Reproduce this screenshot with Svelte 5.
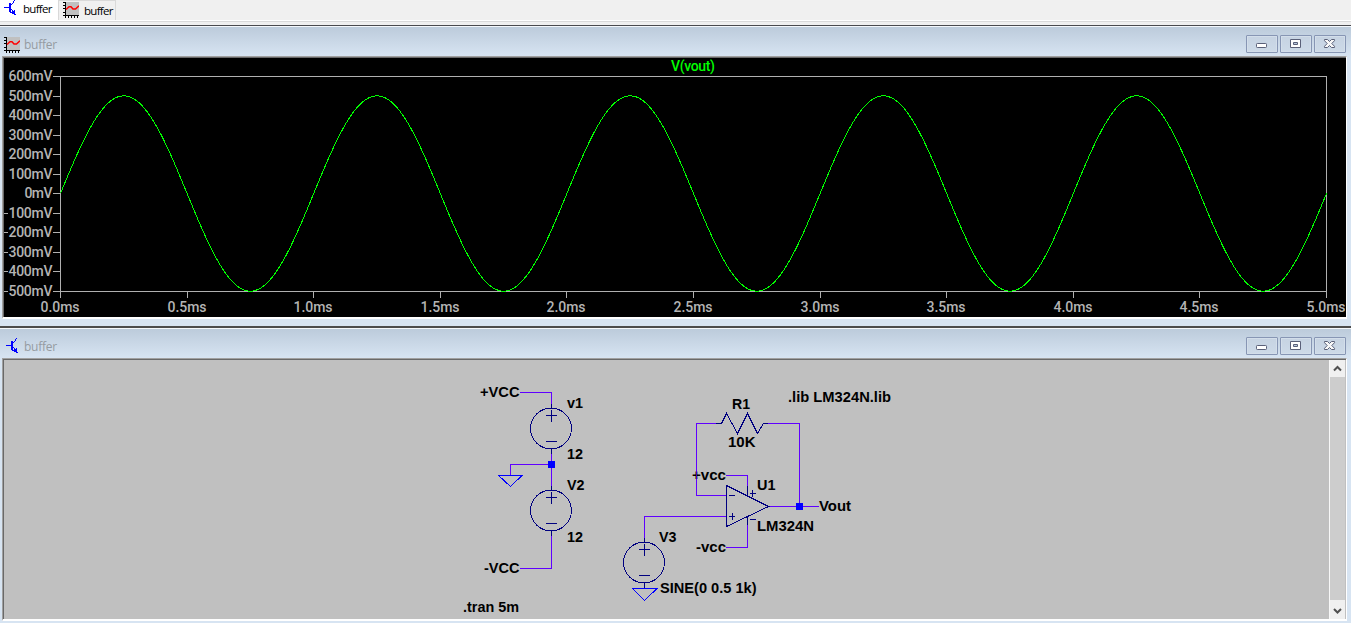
<script>
  const yTicks = [600, 500, 400, 300, 200, 100, 0, -100, -200, -300, -400, -500]
    .map((v, i) => ({ v, y: 76 + Math.round(i * 19.54) }));
  const xTicks = Array.from({ length: 11 }, (_, i) => ({
    label: (i * 0.5).toFixed(1) + 'ms',
    x: 60 + Math.round(i * 126.6)
  }));
  const wave = Array.from({ length: 423 }, (_, i) => {
    const x = i * 3;
    return `${x + 60.5},${(193.5 - 97.7 * Math.sin((x / 253.2) * 2 * Math.PI)).toFixed(2)}`;
  }).join(' ');

  const sources = [
    { x: 551.5, y: 428.5 },
    { x: 551.5, y: 510.5 },
    { x: 644.5, y: 562.5 }
  ];

  const labels = [
    ['+VCC', 480, 397, 39.5], ['v1', 567, 408, 16], ['12', 567, 459, 16],
    ['V2', 567, 490, 17.5], ['12', 567, 542, 16], ['-VCC', 484, 573, 35.5],
    ['.tran 5m', 463, 612, 56], ['R1', 732, 409, 18], ['10K', 728, 447, 27.5],
    ['.lib LM324N.lib', 788, 402, 103], ['+vcc', 692, 480, 34], ['U1', 757, 490, 18.5],
    ['LM324N', 757, 531, 57], ['Vout', 819, 511, 32], ['-vcc', 696, 552, 30],
    ['V3', 659, 542, 17.5], ['SINE(0 0.5 1k)', 660, 593, 96.5]
  ];
</script>

{#snippet transistor()}
  <svg class="ico" width="16" height="16" viewBox="0 0 16 16" shape-rendering="crispEdges">
    <path d="M0 7h5v1H0zM5 3h2v9H5zM7 4h1v1H7zM8 3h1v1H8zM9 1h1v2H9zM10 0h1v1h-1z" fill="#00f" />
    <path d="M7 9h1v1H7zM8 10h1v2H8zM9 11h1v1H9zM6 12h4v1H6zM8 13h3v1H8zM10 10h1v4h-1zM10 14h1v1h-1zM11 15h1v-1h-1z" fill="#00f" />
  </svg>
{/snippet}

{#snippet chart()}
  <svg class="ico" width="16" height="16" viewBox="0 0 16 16">
    <path d="M2 0h14v13H2z" fill="#c0c0c0" />
    <path d="M2 0h1v16H2zM0 13h16v1H0zM0 0h2v1H0zM0 3h2v1H0zM0 6h2v1H0zM0 10h2v1H0zM5 14h1v2H5zM8 14h1v2H8zM11 14h1v2h-1zM14 14h1v2h-1z" fill="#000" />
    <path d="M3 7.500L6 4.800H8L10 7H12.500L16 3.700" fill="none" stroke="#f00" stroke-width="1.500" />
  </svg>
{/snippet}

{#snippet buttons()}
  <div class="buttons">
    <span class="btn">
      <svg width="30" height="16" viewBox="0 0 30 16"><rect x="9.500" y="7.500" width="10" height="4" rx="0.8" fill="#fff" stroke="#5a6078" /></svg>
    </span>
    <span class="btn">
      <svg width="30" height="16" viewBox="0 0 30 16"><path d="M9.500 3.500h10v8h-10z" fill="#fff" stroke="#5a6078" /><path d="M12.500 6.500h4v2h-4z" fill="#b8c8de" stroke="#5a6078" /></svg>
    </span>
    <span class="btn">
      <svg width="30" height="16" viewBox="0 0 30 16"><path d="M9.500 3.500h3l2 2 2-2h3v1.200l-2.700 2.800 2.700 2.800v1.200h-3l-2-2-2 2h-3v-1.200l2.700-2.800-2.700-2.800z" fill="#f8f8f8" stroke="#5a6078" /></svg>
    </span>
  </div>
{/snippet}

<div class="app">
  <nav class="tabs">
    <div class="tab active">{@render transistor()}<span>buffer</span></div>
    <div class="tab second">{@render chart()}<span>buffer</span></div>
  </nav>

  <section class="win upper">
    <header>{@render chart()}<span class="name">buffer</span>{@render buttons()}</header>
    <div class="frame">
      <svg class="plot" width="1341" height="259" viewBox="4 58 1341 259">
        <g class="axis" shape-rendering="crispEdges">
          <path d="M60.5 76.500H1326.500V298M60.5 76V298M53 291.500H1327" />
          {#each yTicks as t}<path d="M53 {t.y + 0.5}h8" />{/each}
          {#each xTicks as t}<path d="M{t.x + 0.5} 291v7" />{/each}
        </g>
        {#each yTicks as t}
          {@const len = t.v === 0 ? 28 : 44}
          <text class="tick" x={52.5 - len} y={t.y + 5} textLength={len}>{Math.abs(t.v)}mV</text>
          {#if t.v < 0}<path d="M4 {t.y + 0.5}h4" class="axis" shape-rendering="crispEdges" />{/if}
        {/each}
        {#each xTicks as t}
          <text class="tick" x={t.x - 19.5} y="312" textLength="39">{t.label}</text>
        {/each}
        <polyline class="wave" points={wave} shape-rendering="crispEdges" />
        <text class="trace" x="671" y="71" textLength="44">V(vout)</text>
      </svg>
    </div>
  </section>

  <section class="win lower">
    <header><i class="inset"></i>{@render transistor()}<span class="name">buffer</span>{@render buttons()}</header>
    <div class="frame sheet">
      <svg class="schematic" width="1325" height="259" viewBox="4 360 1325 259">
        <g class="wire" shape-rendering="crispEdges">
          <path d="M520 392.500H551.500V404M551.500 453V486M551.500 464.500H510.500V475M551.500 536V568.500H520" />
          <path d="M717 423.500H696.500V495.500H726M768 423.500H799.500V506M768 506.500H819M726 475.500H747.500V486M747.500 525V547.500H726M726 516.500H644.500V538" />
        </g>
        <g class="part" shape-rendering="crispEdges">
          {#each sources as s}
            <circle cx={s.x - 0.5} cy={s.y} r="20.400" />
            <path d="M{s.x} {s.y - 24.5}v4.500M{s.x} {s.y + 20}v5M{s.x - 5.5} {s.y - 13}h11M{s.x} {s.y - 18.5}v11.500M{s.x - 5.5} {s.y + 13}h11" />
          {/each}
          <path d="M716 423.500H721.500L726.500 413.500L737.500 433.500L747.500 413.500L757.500 433.500L763.500 423.500H768" />
          <path d="M726.500 485.500L768.500 506.500L726.500 526.500ZM747.500 486V495.500M747.500 516V525M729 495.500h6M729 516.500h6M732.500 513v7M750 493.500h6M752.500 490v7M750 519.500h6M644.500 582v6" />
        </g>
        <g class="ground" shape-rendering="crispEdges">
          <path d="M498.500 475.500H522L510.500 486.500ZM632.500 588.500H657L644.500 600.500Z" />
        </g>
        <path d="M548 461h7v7h-7zM796 503h7v7h-7z" fill="#00f" />
        {#each labels as [text, x, y, len]}
          <text class="label" {x} {y} textLength={len} lengthAdjust="spacingAndGlyphs">{text}</text>
        {/each}
        <path d="M696.500 466V485" stroke="#6000ff" opacity=".7" shape-rendering="crispEdges" />
      </svg>
      <div class="scroll">
        <span><svg width="15" height="17" viewBox="0 0 15 17"><path d="M4 10.500L7.500 7L11 10.500" /></svg></span>
        <span><svg width="15" height="19" viewBox="0 0 15 19"><path d="M4 9L7.500 12.500L11 9" /></svg></span>
      </div>
    </div>
  </section>
</div>

<style>
  :global(body) { margin: 0; overflow: hidden; }
  .app {
    width: 1351px; height: 623px; overflow: hidden;
    display: flex; flex-direction: column;
    background: #d7e4f2; font-family: "Open Sans", "Noto Sans", sans-serif;
  }
  .ico { display: block; flex: none; }
  .tabs {
    box-sizing: border-box; height: 25px; flex: none; display: flex;
    background: linear-gradient(#f0f0f0 0 20px, #fff 20px 21px, #d9d9d9 21px 22px, #f0f0f0 22px);
  }
  .tab {
    box-sizing: border-box; display: flex; align-items: flex-start;
    font-size: 11.500px; line-height: 16px; color: #000; letter-spacing: -0.7px;
  }
  .active { width: 58px; height: 21px; padding: 0 0 0 4px; background: #fff; }
  .active span { margin: 1px 0 0 3px; }
  .second {
    width: 58px; height: 20px; padding: 1px 0 0 4px;
    border: solid #d9d9d9; border-width: 1px 1px 0 1px;
  }
  .second span { margin: 1px 0 0 5px; }
  .win { box-sizing: border-box; flex: none; display: flex; flex-direction: column; }
  .upper { height: 301px; border-top: 1px solid #4a4a4e; }
  .lower { height: 297px; border-top: 2px solid #4c4c4c; }
  header {
    box-sizing: border-box; display: flex; align-items: flex-start; flex: none;
    height: 30px; padding: 10px 5px 0 4px;
    border-top: 1px solid #f4f8fc;
    background: linear-gradient(#bccbdb, #d7e4f2);
  }
  .inset { width: 2px; }
  .lower .ico { margin-top: -1px; }
  .name { margin-left: 4px; font-size: 12px; line-height: 16px; color: #959ba1; letter-spacing: -0.25px; }
  .lower .name { margin-left: 2px; }
  .buttons { display: flex; gap: 2px; margin: -2px 0 0 auto; }
  .btn {
    box-sizing: border-box; width: 32px; height: 18px;
    border: 1px solid #8796b4; border-radius: 1px;
    background: linear-gradient(#c6d3e2, #cddae8); box-shadow: inset 0 0 0 1px #d3deea;
  }
  .btn svg { display: block; }
  .frame {
    box-sizing: border-box; flex: none; margin: 0 4px 0 2px; height: 263px;
    border: solid; border-width: 1px 1px 2px 1px; border-color: #a0a0a0 #fff #fff #a0a0a0;
    display: flex; background: #000; box-shadow: inset 1px 1px #696969;
    padding: 1px 0 0 1px;
  }
  .plot { display: block; }
  .axis { fill: none; stroke: #b0b0b0; }
  .tick { font: 500 14px Roboto, "Liberation Sans", sans-serif; fill: #b4b4b4; }
  .trace { font: 500 14px Roboto, "Liberation Sans", sans-serif; fill: #0f0; }
  .wave { fill: none; stroke: #0f0; }
  .sheet { background: #c0c0c0; }
  .schematic { display: block; flex: none; }
  .wire { fill: none; stroke: #6000ff; }
  .part { fill: none; stroke: #000080; }
  .ground { fill: none; stroke: #0000ff; }
  .label { font: bold 15px "Liberation Sans", sans-serif; fill: #000; white-space: pre; }
  .scroll {
    box-sizing: border-box; width: 16px; border-left: 1px solid #f8f8f8;
    display: flex; flex-direction: column; justify-content: space-between; background: #cdcdcd;
  }
  .scroll span { display: block; background: #f0f0f0; }
  .scroll svg { display: block; }
  .scroll path { fill: none; stroke: #505050; stroke-width: 2; }
</style>
